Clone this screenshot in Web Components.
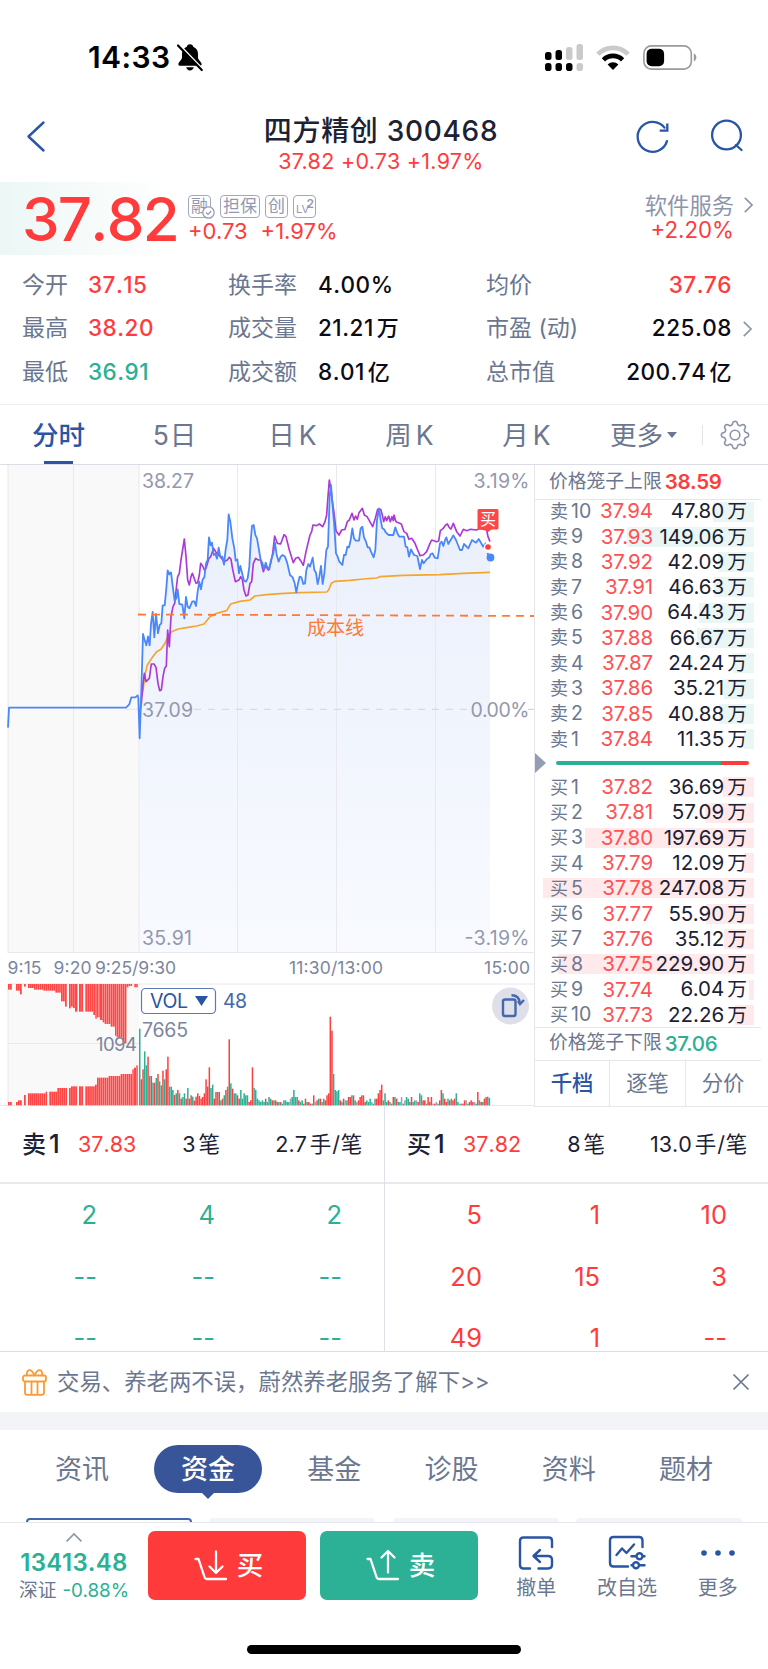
<!DOCTYPE html>
<html lang="zh-CN">
<head>
<meta charset="utf-8">
<meta name="viewport" content="width=device-width, initial-scale=1">
<title>四方精创 300468</title>
<style>
    :root {
        --red: #ff3b3c;
        --green: #2bb094;
        --blue: #2a55a5;
        --ink: #1c2233;
        --label: #6b7790;
        --muted: #9298ae;
        --line: #e6e7ed;
    }
    body {
        margin: 0;
        width: 768px;
        background: #fff;
        color: var(--ink);
        font-family: Inter, "Noto Sans CJK SC", sans-serif;
        font-size: 22px;
        line-height: 1;
    }
</style>
</head>
<body>
<stock-page></stock-page>
<script>
class BaseElement extends HTMLElement {
    constructor() {
        super();
        this.attachShadow({ mode: 'open' });
    }

    connectedCallback() {
        this.shadowRoot.innerHTML = `
            <style>
                *, :host { box-sizing: border-box; }
                :host { display: block; white-space: nowrap; }
                svg { display: block; flex: none; overflow: visible; }
                .red { color: var(--red); }
                .green { color: var(--green); }
            </style>` + this.render();
    }
}

class StatusBar extends BaseElement {
    render() {
        return `
            <style>
                :host { height: 100px; padding: 14px 71px 0 88px; display: flex; align-items: center; color: #000; }
                .time { font-size: 30px; font-weight: 600; letter-spacing: 0.4px; }
                .bell { margin-left: 7px; margin-right: auto; }
                .wifi { margin: 0 13px; }
            </style>
            <span class="time">14:33</span>
            <svg class="bell" width="26" height="28" viewBox="0 0 26 28">
                <path d="M13 1.2c-1.9 0-3 1.1-3.2 2.5C6.700 4.900 5 7.500 5 11v3.500c0 2.300-3.600 4.500-3.600 6.700 0 1 .8 1.500 2 1.500h19.200c1.200 0 2-.5 2-1.500 0-2.200-3.600-4.400-3.600-6.700V11c0-3.500-1.700-6.100-4.800-7.300C16 2.300 14.900 1.200 13 1.200zM9.200 24.200h7.600c-.5 2-1.900 3.200-3.800 3.200s-3.300-1.200-3.800-3.200z"/>
                <path d="M2 1.500 26 26.500" stroke="#fff" stroke-width="2"/>
                <path d="M1 2.500 24.800 27" stroke="#000" stroke-width="2.200" stroke-linecap="round"/>
            </svg>
            <svg width="38" height="27" viewBox="0 0 38 27">
                <g fill="#cacaca">
                    <rect x="21" y="3" width="6.500" height="13" rx="2.500"/>
                    <rect x="31.500" width="6.500" height="16" rx="2.500"/>
                    <rect x="31.500" y="19" width="6.500" height="8" rx="2.800"/>
                </g>
                <rect y="8" width="6.500" height="8" rx="2.500"/>
                <rect x="10.500" y="6" width="6.500" height="10" rx="2.500"/>
                <rect y="19" width="6.500" height="8" rx="2.800"/>
                <rect x="10.500" y="19" width="6.500" height="8" rx="2.800"/>
                <rect x="21" y="19" width="6.500" height="8" rx="2.800"/>
            </svg>
            <svg class="wifi" width="34" height="25" viewBox="0 0 34 25">
                <g fill="none" stroke-width="4.600">
                    <path d="M1.800 9.200a21.500 21.500 0 0 1 30.400 0" stroke="#cacaca"/>
                    <path d="M7.400 14.800a13.600 13.600 0 0 1 19.200 0" stroke="#000"/>
                </g>
                <path d="m17 25-5.400-5.400a7.600 7.600 0 0 1 10.800 0z"/>
            </svg>
            <svg width="54" height="25" viewBox="0 0 54 25">
                <rect x=".9" y=".9" width="47.400" height="23.200" rx="7.500" fill="none" stroke="#9b9b9b" stroke-width="1.600"/>
                <rect x="3.600" y="3.700" width="17.500" height="17.500" rx="5"/>
                <path d="M50.800 8.600c3.400 1 3.400 6.800 0 7.800z" fill="#9b9b9b"/>
            </svg>`;
    }
}

class NavBar extends BaseElement {
    render() {
        return `
            <style>
                :host { height: 82px; padding: 0 27px; display: grid; grid-template-columns: 104px 1fr 104px; }
                .back { margin-top: 21px; }
                .title { padding: 17px 6px 0 0; text-align: center; }
                .name { font-size: 28px; font-weight: 500; letter-spacing: 0.700px; }
                .price { font-size: 21.500px; margin-top: 5px; line-height: 22px; color: var(--red); letter-spacing: 0.280px; }
                .actions { display: flex; gap: 42px; margin-top: 20px; }
            </style>
            <svg class="back" width="19" height="31" viewBox="0 0 19 31" fill="none" stroke="#2a55a5" stroke-width="2.400" stroke-linecap="round" stroke-linejoin="round">
                <path d="M16.500 1.500 1.500 15.500l15 14"/>
            </svg>
            <div class="title">
                <div class="name"><slot></slot></div>
                <div class="price"><slot name="price"></slot></div>
            </div>
            <div class="actions">
                <svg width="32" height="32" viewBox="0 0 32 32" fill="none" stroke="#2a55a5" stroke-width="2.300">
                    <path d="M30 21.200A15 15 0 1 1 27.500 7.600" stroke-linecap="round"/>
                    <path d="M30.300 3.500v7.200h-7.600"/>
                </svg>
                <svg width="32" height="32" viewBox="0 0 32 32" fill="none" stroke="#2a55a5" stroke-width="2.300" stroke-linecap="round">
                    <circle cx="15.500" cy="15" r="14.400"/>
                    <path d="m25 25 5.500 5"/>
                </svg>
            </div>`;
    }
}

class QuoteHeader extends BaseElement {
    render() {
        return `
            <style>
                :host {
                    height: 73px; display: flex; padding: 0 15px 0 22px;
                    background: linear-gradient(90deg, #ecf7f5, #fff 172px);
                }
                .price { width: 166px; font-size: 60px; font-weight: 500; font-kerning: none; letter-spacing: -1.800px; line-height: 74px; }
                .mid { flex: 1; padding-top: 13px; }
                .tags { display: flex; gap: 5px; height: 23px; color: #9298b4; font-size: 17px; }
                .tag { position: relative; border: 1.500px solid #a3a8c0; border-radius: 4px; padding: 0 2px; line-height: 20px; }
                .tag:first-child { margin-right: 4px; }
                .tag svg { position: absolute; right: -5px; bottom: -2px; }
                .lv { font-size: 11px; line-height: 26px; width: 23px; }
                .lv sup { position: absolute; right: 1px; top: 2px; font-size: 12px; line-height: 1; font-weight: 600; }
                .change { display: flex; gap: 13px; margin-top: 2px; line-height: 22px; font-size: 22px; }
                .sector { padding-top: 12px; text-align: right; color: #8d95ab; font-size: 22.300px; }
                .sector div { line-height: 23px; }
                .sector .red { line-height: 26px; }
                .arrow { margin: 15px 0 0 10px; }
            </style>
            <div class="price red">37.82</div>
            <div class="mid">
                <div class="tags">
                    <span class="tag">融<svg width="13" height="13" viewBox="0 0 13 13" fill="#fff" stroke="#9298b4" stroke-width="1.200"><circle cx="6.500" cy="6.500" r="5.700"/><path d="m4 6.500 2 2 3.200-3.500" fill="none"/></svg></span>
                    <span class="tag">担保</span>
                    <span class="tag">创</span>
                    <span class="tag lv">LV<sup>2</sup></span>
                </div>
                <div class="change red"><span>+0.73</span><span>+1.97%</span></div>
            </div>
            <div class="sector">
                <div>软件服务</div>
                <div class="red">+2.20%</div>
            </div>
            <svg class="arrow" width="9" height="16" viewBox="0 0 9 16" fill="none" stroke="#8d95ab" stroke-width="1.700"><path d="m.8.800 7.200 7.200L.8 15.200"/></svg>`;
    }
}

class QuoteStats extends BaseElement {
    render() {
        return `
            <style>
                :host {
                    height: 150px; padding: 8.300px 15px 0 22px; border-bottom: 1px solid #eeeef2;
                    display: grid; grid-template-columns: 206px 258px 1fr; grid-auto-rows: 43.600px; align-items: center;
                }
                .cell { display: flex; align-items: center; font-size: 23px; }
                .label { width: 66px; color: var(--label); }
                .mid .label { width: 90px; }
                .value { font-size: 22.500px; font-weight: 500; font-kerning: none; letter-spacing: 0.500px; }
                .black { color: #0c0a14; }
                .unit { margin-left: 3px; font-size: 22px; }
                .last .value { margin-left: auto; }
                .last .label { width: auto; }
                .more { width: 21px; padding-left: 11px; }
            </style>
            ${this.cell('', '今开', '37.15', 'red')}
            ${this.cell('mid', '换手率', '4.00%', 'black')}
            ${this.cell('last', '均价', '37.76', 'red')}
            ${this.cell('', '最高', '38.20', 'red')}
            ${this.cell('mid', '成交量', '21.21', 'black', '万')}
            ${this.cell('last', '市盈 (动)', '225.08', 'black', '', true)}
            ${this.cell('', '最低', '36.91', 'green')}
            ${this.cell('mid', '成交额', '8.01', 'black', '亿')}
            ${this.cell('last', '总市值', '200.74', 'black', '亿')}`;
    }

    cell(type, label, value, color, unit = '', arrow = false) {
        const arrowSvg = arrow ? '<svg width="9" height="16" viewBox="0 0 9 16" fill="none" stroke="#8d95ab" stroke-width="1.700"><path d="m.8.800 7.200 7.200L.8 15.200"/></svg>' : '';
        return `
            <div class="cell ${type}">
                <span class="label">${label}</span>
                <span class="value ${color}">${value}${unit && `<span class="unit">${unit}</span>`}</span>
                ${type === 'last' ? `<span class="more">${arrowSvg}</span>` : ''}
            </div>`;
    }
}

class PeriodTabs extends BaseElement {
    render() {
        // eight-lobed outline of the settings gear
        let gear = '';
        for (let i = 0; i <= 96; i++) {
            const a = i / 96 * Math.PI * 2;
            const r = 12 + Math.max(-1, Math.min(1, 1.500 * Math.cos(a * 8))) * 1.600;
            gear += `${i ? 'L' : 'M'}${(15 + r * Math.sin(a)).toFixed(2)} ${(15 - r * Math.cos(a)).toFixed(2)}`;
        }
        return `
            <style>
                :host {
                    height: 60px; border-bottom: 1px solid #dcdde4; color: var(--label); font-size: 26.500px;
                    display: grid; grid-template-columns: repeat(6, 117px) 1fr;
                }
                .tab { display: flex; justify-content: center; align-items: center; gap: 4px; position: relative; padding-top: 1px; }
                .day { gap: 1px; padding-right: 2px; }
                .active { color: var(--blue); font-weight: 500; }
                .active::after { content: ''; position: absolute; bottom: 0; left: 44px; width: 29px; height: 3px; background: var(--blue); }
                .caret { border: 5px solid transparent; border-top: 6px solid var(--label); border-bottom: 0; }
                .settings { display: flex; align-items: center; justify-content: center; }
                .settings::before { content: ''; width: 1px; height: 20px; background: #e3e4ea; margin: 0 17px 0 -18px; }
            </style>
            <div class="tab active">分时</div>
            <div class="tab day"><span>5</span><span>日</span></div>
            <div class="tab"><span>日</span><span>K</span></div>
            <div class="tab"><span>周</span><span>K</span></div>
            <div class="tab"><span>月</span><span>K</span></div>
            <div class="tab"><span>更多</span><i class="caret"></i></div>
            <div class="settings">
                <svg width="30" height="30" viewBox="0 0 30 30" fill="none" stroke="#8b93a8" stroke-width="1.600"><path d="${gear}Z"/><circle cx="15" cy="15" r="4.800"/></svg>
            </div>`;
    }
}

// Chart series are kept on a fine grid, three units to a pixel
const PRICE = '24,803 27,743 378,743 388,733 394,712 406,712 413,706 415,715 419,835 424,690 429,522 434,540 439,556 444,529 449,556 453,492 458,456 463,532 468,462 474,520 479,495 484,490 488,436 494,436 499,385 503,331 508,343 513,337 519,385 524,422 529,415 533,388 538,432 547,434 553,475 558,411 563,440 568,445 577,424 583,424 588,438 593,395 598,365 603,388 608,358 613,352 618,310 623,300 627,232 632,256 636,248 641,285 646,281 651,296 656,263 661,290 667,290 672,314 677,268 682,240 686,163 691,185 697,235 703,265 707,302 712,298 717,340 721,318 727,343 732,362 738,365 743,355 748,320 752,245 756,198 761,195 766,225 771,235 777,270 782,300 787,308 792,328 797,308 802,322 808,328 813,300 820,280 825,248 830,285 836,305 842,290 848,285 855,290 862,310 870,345 878,352 884,370 889,397 894,370 899,350 904,352 910,372 915,370 919,330 925,312 930,320 938,293 943,330 948,338 953,372 958,350 963,318 968,372 973,340 979,270 984,260 989,110 993,75 998,140 1003,200 1008,280 1013,290 1018,305 1027,315 1032,285 1037,285 1042,260 1047,262 1052,240 1057,205 1062,235 1067,242 1077,242 1082,205 1087,200 1092,232 1098,245 1103,262 1108,262 1113,275 1121,292 1126,270 1131,180 1137,145 1142,180 1147,205 1152,208 1158,218 1166,225 1180,225 1186,202 1192,220 1198,230 1212,230 1217,260 1222,262 1227,290 1233,268 1242,285 1252,288 1260,327 1266,300 1271,310 1280,298 1288,292 1292,282 1298,280 1304,293 1313,295 1320,250 1325,245 1330,258 1336,238 1339,232 1345,252 1360,226 1368,240 1380,270 1386,270 1392,252 1405,265 1416,240 1428,248 1436,237 1450,260 1458,248';
const INDEX = '419,760 424,730 429,670 433,640 438,665 448,655 454,612 462,612 468,622 474,670 479,692 484,690 489,650 494,625 499,618 503,510 508,560 513,470 519,440 524,430 530,375 533,350 538,340 543,300 553,237 558,290 563,360 568,375 573,350 577,340 588,370 593,368 598,345 602,310 608,318 613,330 618,325 627,295 632,290 641,265 650,280 656,285 665,295 672,305 682,300 688,292 693,298 698,328 706,365 717,360 722,350 727,358 732,390 738,408 744,405 750,370 755,365 760,310 767,295 775,300 782,300 790,335 797,318 805,330 812,310 818,280 824,228 832,250 842,252 852,224 858,230 868,270 880,308 887,295 895,292 902,302 910,316 918,275 930,225 935,215 939,195 950,197 958,192 968,200 975,185 980,165 984,110 988,60 993,90 998,130 1003,165 1008,212 1017,225 1025,210 1035,208 1042,185 1048,180 1056,160 1062,180 1067,168 1072,178 1077,158 1087,145 1093,165 1101,170 1108,182 1118,200 1126,175 1133,148 1142,148 1147,165 1151,185 1156,170 1160,182 1166,168 1171,185 1176,170 1180,182 1182,165 1188,185 1204,192 1212,215 1220,220 1227,238 1235,235 1245,250 1253,270 1260,287 1270,285 1280,275 1290,250 1295,240 1310,245 1316,243 1321,212 1330,205 1337,195 1342,192 1348,203 1353,207 1360,190 1370,215 1380,228 1390,208 1400,212 1412,208 1430,210 1440,205 1460,210 1464,230 1470,245';
const AVERAGE = '422,720 429,690 436,640 442,615 455,595 470,575 483,568 495,550 505,527 515,515 535,507 560,503 590,498 612,492 630,470 650,460 680,452 692,432 720,424 750,420 765,408 800,404 840,401 900,398 980,396 986,390 994,370 1005,364 1050,361 1090,357 1130,354 1140,350 1210,346 1320,344 1390,340 1470,337';

// Call auction volume: start, end, height
const AUCTION_TOP = '24,36,17 48,60,20 60,66,31 72,78,8 84,102,12 102,130,17 130,166,20 166,183,26 183,195,52 195,201,68 207,213,73 213,219,68 219,225,72 225,233,83 237,250,83 256,280,83 280,286,93 286,291,104 291,300,100 300,308,108 308,314,115 314,332,120 332,345,128 345,350,155 350,368,160 368,380,178 380,386,10 386,397,6 403,414,10';
const AUCTION_BOTTOM = '24,36,10 48,54,10 54,66,15 72,78,31 84,108,36 108,137,36 137,142,41 148,172,41 172,202,52 207,213,52 213,232,57 237,250,57 256,285,57 285,291,62 291,326,83 326,362,88 362,397,94 397,402,108 402,409,113 409,414,120';

// One bar a minute from 9:30
const VOLUME = '230g 78r 108r 162g 120g 146r 88g 88r 68g 68r 82g 94r 72g 60g 104r 78g 108r 146r 56g 56g 46g 31r 36g 46r 36g 20r 25g 36g 20r 52g 20r 30r 26g 14r 26r 36r 28r 20r 25r 36r 78r 56r 114r 52g 62g 20r 40r 40g 40r 15g 20r 30g 46r 56g 198r 66g 50r 36g 36g 30r 20r 46g 20g 36g 30g 30g 10r 15r 114r 52g 46g 20g 15g 10g 15g 10g 20r 10g 25g 20g 15r 15g 15r 10r 10g 10r 5g 15g 15g 10g 10g 20n 25g 46g 25g 25g 15r 10g 15g 5r 20r 10g 10r 5r 5g 30r 10n 15r 20g 20r 10g 20g 15r 30r 36r 266r 224r 94g 46g 42g 46g 15r 10g 20r 15n 15g 25r 25r 30g 30r 15g 10n 15r 25r 30r 30r 10r 15g 10g 20g 10n 5g 20g 20r 36r 46r 62r 15g 36g 10g 15r 10g 5g 25r 25g 20r 10g 10g 25n 5g 15n 25g 20g 10r 25r 10g 15g 15n 10r 36g 30g 15r 15r 5g 25r 10r 25r 5n 5r 10n 5g 15r 46r 36g 20r 10r 20g 15r 20g 15r 20r 36g 10g 5n 5g 5r 15r 15n 5g 10r 15r 10r 10n 5g 40r 15g 10r 10g 20r 25r 26g 22g';

class MinuteChart extends BaseElement {
    render() {
        const colors = { r: '#ff3f3f', g: '#2bb094', n: '#9aa0b4' };
        const minutes = VOLUME.split(' ');
        const step = 1054 / minutes.length;
        const auction = (data, top) => data.split(' ').map(item => {
            const [x0, x1, h] = item.split(',').map(Number);
            const n = Math.max(1, Math.round((x1 - x0) / 5.900));
            const w = (x1 - x0) / n;
            let out = '';
            for (let i = 0; i < n; i++) {
                out += `<rect x="${(x0 + i * w).toFixed(1)}" y="${top ? 2952 : 3316 - h}" width="${(w - 0.700).toFixed(1)}" height="${h}"/>`;
            }
            return out;
        }).join('');
        const bars = minutes.map((item, i) => {
            const h = parseInt(item, 10);
            return `<rect x="${(417 + i * step).toFixed(1)}" y="${3316 - h}" width="4.500" height="${h}" fill="${colors[item.slice(-1)]}"/>`;
        }).join('');
        const session = PRICE.slice(PRICE.indexOf('419,835'));

        return `
            <style>
                svg { overflow: hidden; }
                text { font-size: 19.500px; fill: var(--muted); }
                .axis { font-size: 17.500px; fill: #7c869e; }
                .end { text-anchor: end; }
            </style>
            <svg width="534" height="641" viewBox="0 465 534 641">
                <defs>
                    <linearGradient id="area" x1="0" y1="0" x2="0" y2="1">
                        <stop offset="0" stop-color="#e9effb"/>
                        <stop offset="1" stop-color="#f8faff"/>
                    </linearGradient>
                </defs>
                <path d="M8 465h131v488H8zM8 984h131v121H8z" fill="#f9f9f9"/>
                <g transform="translate(0 460) scale(.33333)">
                    <polygon points="${session} 1470,292 1470,1476 417,1476" fill="url(#area)"/>
                </g>
                <g stroke="#e8e8ed" fill="none">
                    <path d="M8 465v488M73.500 465v488M139 465v488M237.500 465v488M336.500 465v488M435.500 465v488"/>
                    <path d="M8 984v121M8 1043.500h131M8 952.500h526M8 984h526M0 1105.500h534"/>
                    <path d="M126 709.300h14" />
                    <path d="M194 709.300h276" stroke="#d2d5df" stroke-dasharray="7 7"/>
                    <path d="M528 709.300h6" stroke="#c8ccd8"/>
                </g>
                <g transform="translate(0 460) scale(.33333)" fill="none" stroke-linejoin="round">
                    <polyline points="${AVERAGE}" stroke="#f3a62b" stroke-width="5"/>
                    <polyline points="${INDEX}" stroke="#ac39d5" stroke-width="5"/>
                    <polyline points="${PRICE}" stroke="#4a87fb" stroke-width="5.400"/>
                </g>
                <path d="M138 614.500 534 616" stroke="#ff7a36" stroke-width="1.800" stroke-dasharray="8 6"/>
                <path d="m487.500 553 1.500 4" stroke="#4a87fb" stroke-width="2"/>
                <circle cx="490.500" cy="557.500" r="3.900" fill="#4a87fb"/>
                <circle cx="488" cy="547" r="4.200" fill="#fff"/>
                <circle cx="488" cy="547" r="2.800" fill="#ff3b3c"/>
                <path d="M479 509h18a1.500 1.500 0 0 1 1.500 1.500V528a1.500 1.500 0 0 1-1.500 1.500h-5.500l-3.500 2.500-3.500-2.500H479a1.500 1.500 0 0 1-1.500-1.500v-17.500A1.500 1.500 0 0 1 479 509z" fill="#ff4646"/>
                <text x="480" y="525" style="font-size:16px;fill:#fff">买</text>
                <text x="307" y="635" style="font-size:19px;fill:#ff7a36">成本线</text>

                <text x="142" y="488" textLength="52">38.27</text>
                <text x="529.500" y="488" textLength="56" class="end">3.19%</text>
                <text x="142" y="716.500" textLength="51">37.09</text>
                <text x="529.500" y="716.500" textLength="59" class="end">0.00%</text>
                <text x="142" y="945" textLength="50">35.91</text>
                <text x="529.500" y="945" textLength="65" class="end">-3.19%</text>

                <text class="axis" x="7.500" y="973.500" textLength="34">9:15</text>
                <text class="axis" x="53.500" y="973.500" textLength="38">9:20</text>
                <text class="axis" x="95" y="973.500" textLength="81">9:25/9:30</text>
                <text class="axis" x="289" y="973.500" textLength="94">11:30/13:00</text>
                <text class="axis end" x="530" y="973.500" textLength="46">15:00</text>

                <g transform="scale(.33333)" fill="#ff4646">
                    ${auction(AUCTION_TOP, true)}
                    ${auction(AUCTION_BOTTOM, false)}
                    ${bars}
                </g>
                <text class="axis" x="96" y="1050.500" textLength="41" style="font-size:18.500px">1094</text>
                <text x="142" y="1036.500" textLength="46" style="fill:#7c869e">7665</text>
                <rect x="141.500" y="988.500" width="74" height="25" rx="4" fill="#fff" stroke="#5b7bb8" stroke-width="1.200"/>
                <text x="150" y="1007.500" textLength="38" style="fill:#2a55a5">VOL</text>
                <path d="M195 996h13l-6.500 10z" fill="#2a55a5"/>
                <text x="223" y="1007.500" textLength="24" style="fill:#4467ab">48</text>

                <circle cx="510.500" cy="1006" r="18.500" fill="#dedfe8"/>
                <g fill="none" stroke="#4568ad" stroke-width="2.400">
                    <rect x="503" y="999.500" width="12.500" height="16.500" rx="2"/>
                    <path d="M511.500 995.300c5 0 8 3 8.500 8"/>
                    <path d="m518 1001 2 3 4-4"/>
                </g>
            </svg>`;
    }
}

class BookRow extends BaseElement {
    render() {
        const side = this.getAttribute('side');
        const volume = this.getAttribute('volume');
        return `
            <style>
                :host { display: grid; grid-template-columns: 47px 1fr 94px; align-items: center; height: 25.300px; padding: 0 21px 0 15px; position: relative; }
                .depth { position: absolute; right: 14px; top: 2.500px; height: 20px; background: ${side === '卖' ? '#e9f6f3' : '#ffe9ea'}; }
                span { position: relative; }
                .label { font-size: 18px; color: var(--label); }
                .label b { font-size: 19.500px; font-weight: 400; margin-left: 3px; }
                .price { font-size: 20.500px; text-align: right; color: #ff5053; letter-spacing: -0.100px; }
                .volume { font-size: 20.500px; text-align: right; letter-spacing: 0; }
                .volume b { font-weight: 400; font-size: 19.800px; margin-left: 3px; }
            </style>
            <i class="depth" style="width: ${Math.round(volume * 0.854)}px"></i>
            <span class="label">${side}<b>${this.getAttribute('level')}</b></span>
            <span class="price">${this.getAttribute('price')}</span>
            <span class="volume">${volume}<b>万</b></span>`;
    }
}

class OrderBook extends BaseElement {
    render() {
        const sells = [['37.94', '47.80'], ['37.93', '149.06'], ['37.92', '42.09'], ['37.91', '46.63'], ['37.90', '64.43'], ['37.88', '66.67'], ['37.87', '24.24'], ['37.86', '35.21'], ['37.85', '40.88'], ['37.84', '11.35']];
        const buys = [['37.82', '36.69'], ['37.81', '57.09'], ['37.80', '197.69'], ['37.79', '12.09'], ['37.78', '247.08'], ['37.77', '55.90'], ['37.76', '35.12'], ['37.75', '229.90'], ['37.74', '6.04'], ['37.73', '22.26']];
        const row = (side, level, [price, volume]) => `<book-row side="${side}" level="${level}" price="${price}" volume="${volume}"></book-row>`;
        return `
            <style>
                :host { border-left: 1px solid var(--line); }
                .limit { display: flex; align-items: center; gap: 3px; height: 35px; margin-right: 7px; padding-left: 14px; font-size: 18.800px; color: var(--label); border-bottom: 1px solid var(--line); }
                .limit b { font-size: 20.500px; font-weight: 600; letter-spacing: -0.200px; }
                .upper { margin-bottom: -1px; }
                .lower { height: 34.200px; margin-top: -1px; border-top: 1px solid var(--line); }
                .lower b { font-weight: 500; }
                .ratio { height: 22.800px; display: flex; align-items: center; }
                .ratio::before { content: ''; border: 10.500px solid transparent; border-left: 11px solid #959db3; border-right: 0; }
                .bar { width: 193px; height: 4px; border-radius: 2px; margin-left: 10px; background: linear-gradient(90deg, var(--green) 165px, var(--red) 165px); }
                .tabs { display: grid; grid-template-columns: 75px 76px 1fr; height: 46px; border-bottom: 1px solid var(--line); font-size: 21.300px; color: var(--label); }
                .tabs span { display: flex; align-items: center; justify-content: center; border-right: 1px solid var(--line); }
                .tabs span:last-child { border: 0; padding-right: 8px; }
                .tabs .active { color: var(--blue); font-weight: 500; }
            </style>
            <div class="limit upper">价格笼子上限<b class="red">38.59</b></div>
            ${sells.map((item, i) => row('卖', 10 - i, item)).join('')}
            <div class="ratio"><div class="bar"></div></div>
            ${buys.map((item, i) => row('买', i + 1, item)).join('')}
            <div class="limit lower">价格笼子下限<b class="green">37.06</b></div>
            <div class="tabs"><span class="active">千档</span><span>逐笔</span><span>分价</span></div>`;
    }
}

class QueuePanel extends BaseElement {
    render() {
        const cells = (this.getAttribute('orders') || '').split(',').map(n => `<span>${n}</span>`).join('');
        const [side, price, count, average] = this.getAttribute('head').split(',');
        return `
            <style>
                :host { height: 246px; overflow: hidden; border-bottom: 1px solid #dcdde6; }
                .head { display: grid; grid-template-columns: 56px 80px 62px 143px; align-items: center; height: 78px; padding: 2px 0 0 22px; border-bottom: 2px solid #e8e9ef; font-size: 21.500px; font-kerning: none; }
                .side { font-size: 24px; font-weight: 500; }
                b { font-weight: inherit; margin-left: 3px; }
                .side b { font-size: 26px; line-height: 0; }
                .right { text-align: right; }
                .average b { letter-spacing: 0.800px; }
                .orders { display: grid; grid-template-columns: 96px 118px 127px; grid-auto-rows: 61.300px; align-items: center; text-align: right; font-size: 25.500px; padding: 0.500px 0 0 1px; }
            </style>
            <div class="head">
                <span class="side">${side}<b>1</b></span>
                <span class="red">${price}</span>
                <span class="right">${count}<b>笔</b></span>
                <span class="right average">${average}<b>手/笔</b></span>
            </div>
            <div class="orders ${side === '卖' ? 'green' : 'red'}">${cells}</div>`;
    }
}

class NoticeBar extends BaseElement {
    render() {
        return `
            <style>
                :host { display: flex; align-items: center; height: 60px; padding: 0 19px 0 22px; color: var(--label); font-size: 22.400px; }
                .text { margin: 0 auto 0 10px; }
            </style>
            <svg width="25" height="27" viewBox="0 0 25 27" fill="none" stroke="#fb9a35" stroke-width="1.800" stroke-linejoin="round">
                <rect x="1" y="6.500" width="23" height="6" rx="2"/>
                <path d="M3 12.500v11c0 1.500.8 2.300 2.300 2.300h14.400c1.500 0 2.300-.8 2.300-2.300v-11M9.500 12.500v13M15.500 12.500v13"/>
                <path d="M12.500 6.500C11 3 9 .9 7 1.200S4.500 4.500 5 6.500M12.500 6.500C14 3 16 .9 18 1.200s2.500 3.300 2 5.300"/>
            </svg>
            <span class="text"><slot></slot></span>
            <svg width="16" height="16" viewBox="0 0 16 16" stroke="#6b7790" stroke-width="1.700"><path d="m.5.500 15 15m0-15-15 15"/></svg>`;
    }
}

class SectionTabs extends BaseElement {
    render() {
        return `
            <style>
                :host { height: 110px; border-top: 18px solid #f3f4f7; color: var(--label); font-size: 27px; overflow: hidden; }
                .tabs { display: grid; grid-template-columns: 117px 135px repeat(4, 117.300px); padding: 15px 0 0 23.500px; height: 88px; align-items: start; }
                .tabs span { text-align: center; line-height: 49px; }
                .tabs .active { position: relative; justify-self: center; width: 108px; height: 48px; border-radius: 24px; background: #38559a; color: #fff; font-weight: 500; }
                .active::after { content: ''; position: absolute; left: 47px; top: 47px; border: 7px solid transparent; border-top-color: #38559a; border-bottom: 0; }
                .cards { display: grid; grid-template-columns: repeat(4, 166px); gap: 17.300px; padding-left: 26px; }
                .cards i { height: 20px; border-radius: 4px; background: #f3f4f7; }
                .cards .on { background: #fff; border: 2px solid #4468ad; }
            </style>
            <div class="tabs">
                <span>资讯</span><span class="active">资金</span><span>基金</span><span>诊股</span><span>资料</span><span>题材</span>
            </div>
            <div class="cards"><i class="on"></i><i></i><i></i><i></i></div>`;
    }
}

class TradeBar extends BaseElement {
    render() {
        return `
            <style>
                :host { height: 147px; border-top: 1px solid var(--line); }
                .bar { display: flex; height: 122px; }
                .index { width: 148px; display: flex; flex-direction: column; align-items: center; padding-top: 10px; }
                .point { font-size: 24px; font-weight: 600; letter-spacing: 0.400px; margin-top: 9px; }
                .rate { display: flex; gap: 6px; margin-top: 6px; font-size: 18.800px; line-height: 20px; color: var(--label); }
                .btn { display: flex; align-items: center; justify-content: center; gap: 9px; width: 158px; height: 69px; padding-left: 3px; margin-top: 8px; border-radius: 7px; color: #fff; font-size: 26.500px; font-weight: 500; background: #ff3a3b; }
                .sell { margin-left: 14px; background: #2cb096; }
                .tools { display: grid; grid-template-columns: repeat(3, 90.700px); margin-left: 13px; padding-top: 12px; }
                .tool { display: flex; flex-direction: column; align-items: center; gap: 7px; font-size: 20px; color: var(--label); }
                .home { width: 274px; height: 9px; border-radius: 5px; background: #000; margin-left: 247px; }
            </style>
            <div class="bar">
                <div class="index">
                    <svg width="16" height="9" viewBox="0 0 16 9" fill="none" stroke="#8d95ab" stroke-width="1.600"><path d="m.6 8.400 7.400-7.400 7.400 7.400"/></svg>
                    <span class="point green">13413.48</span>
                    <span class="rate"><span>深证</span><span class="green">-0.88%</span></span>
                </div>
                <div class="btn">
                    <svg width="34" height="31" viewBox="0 0 34 31" fill="none" stroke="#fff" stroke-width="2.300" stroke-linecap="round" stroke-linejoin="round">
                        <path d="M1.500 9h3l6 18c.4 1.300 1 2 2.500 2h19M22 1.500v21M15.500 16.500l6.500 6.500 6.500-6.500"/>
                    </svg>
                    <span>买</span>
                </div>
                <div class="btn sell">
                    <svg width="34" height="31" viewBox="0 0 34 31" fill="none" stroke="#fff" stroke-width="2.300" stroke-linecap="round" stroke-linejoin="round">
                        <path d="M1.500 9h3l6 18c.4 1.300 1 2 2.500 2h19M22 22.500v-21M15.500 7.500 22 1l6.500 6.500"/>
                    </svg>
                    <span>卖</span>
                </div>
                <div class="tools">
                    <div class="tool">
                        <svg width="36" height="36" viewBox="0 0 36 36" fill="none" stroke="#2a55a5" stroke-width="2.400" stroke-linecap="round" stroke-linejoin="round">
                            <path d="M34 12V6c0-2.700-1-3.500-3.500-3.500h-25C3 2.500 2 3.500 2 6v24c0 2.500 1 3.500 3.500 3.500H12M20.500 33.500H30c3 0 4-1 4-4V25c0-3-1-4-4-4H16M22 15l-6.500 6 6.500 6"/>
                        </svg>
                        <span>撤单</span>
                    </div>
                    <div class="tool">
                        <svg width="38" height="36" viewBox="0 0 38 36" fill="none" stroke="#2a55a5" stroke-width="2.400" stroke-linecap="round" stroke-linejoin="round">
                            <path d="M34.500 12V5.500c0-2.500-1-3.500-3.500-3.500H5.500C3 2 2 3 2 5.500V28c0 2.500 1 3.500 3.500 3.500H20M8.500 20l5.500-6.500 4.500 4.500 7.500-8.500"/>
                            <path d="M23.500 21.300h4M35 21.300h1.500M23.500 30.300h1M32 30.300h4.500"/>
                            <circle cx="31.500" cy="21.300" r="3"/><circle cx="28" cy="30.300" r="3"/>
                        </svg>
                        <span>改自选</span>
                    </div>
                    <div class="tool">
                        <svg width="34" height="36" viewBox="0 0 34 36" fill="#2a55a5"><circle cx="3" cy="18" r="2.800"/><circle cx="17" cy="18" r="2.800"/><circle cx="31" cy="18" r="2.800"/></svg>
                        <span>更多</span>
                    </div>
                </div>
            </div>
            <div class="home"></div>`;
    }
}

class StockPage extends BaseElement {
    render() {
        return `
            <style>
                :host { width: 768px; height: 1669px; overflow: hidden; background: #fff; }
                .main { display: grid; grid-template-columns: 534px 234px; height: 641px; }
                .queues { display: grid; grid-template-columns: 384px 384px; }
                .queues queue-panel + queue-panel { border-left: 1px solid #dfe0e7; }
            </style>
            <status-bar></status-bar>
            <nav-bar>四方精创 300468<span slot="price">37.82 +0.73 +1.97%</span></nav-bar>
            <quote-header></quote-header>
            <quote-stats></quote-stats>
            <period-tabs></period-tabs>
            <div class="main">
                <minute-chart></minute-chart>
                <order-book></order-book>
            </div>
            <div class="queues">
                <queue-panel head="卖,37.83,3,2.7" orders="2,4,2,--,--,--,--,--,--"></queue-panel>
                <queue-panel head="买,37.82,8,13.0" orders="5,1,10,20,15,3,49,1,--"></queue-panel>
            </div>
            <notice-bar>交易、养老两不误，蔚然养老服务了解下&gt;&gt;</notice-bar>
            <section-tabs></section-tabs>
            <trade-bar></trade-bar>`;
    }
}

customElements.define('status-bar', StatusBar);
customElements.define('nav-bar', NavBar);
customElements.define('quote-header', QuoteHeader);
customElements.define('quote-stats', QuoteStats);
customElements.define('period-tabs', PeriodTabs);
customElements.define('minute-chart', MinuteChart);
customElements.define('book-row', BookRow);
customElements.define('order-book', OrderBook);
customElements.define('queue-panel', QueuePanel);
customElements.define('notice-bar', NoticeBar);
customElements.define('section-tabs', SectionTabs);
customElements.define('trade-bar', TradeBar);
customElements.define('stock-page', StockPage);
</script>
</body>
</html>
